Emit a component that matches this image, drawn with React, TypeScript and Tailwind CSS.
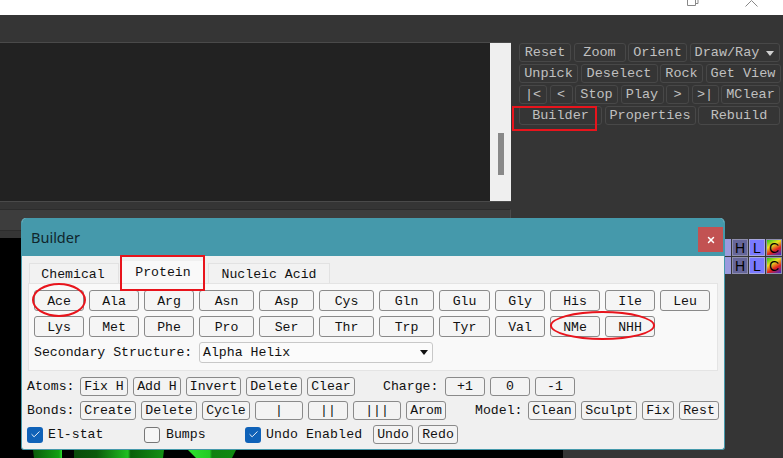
import React from 'react';
import { Check, X } from 'lucide-react';

const mono = "font-['Liberation_Mono',monospace]";

const RightRows = [
  [['Reset', 52], ['Zoom', 52], ['Orient', 59], ['Draw/Ray', 90]],
  [['Unpick', 59], ['Deselect', 77], ['Rock', 43], ['Get View', 75]],
  [['|<', 28], ['<', 23], ['Stop', 43], ['Play', 43], ['>', 23], ['>|', 27], ['MClear', 59]],
  [['Builder', 83], ['Properties', 91], ['Rebuild', 82]],
] as [string, number][][];

const residues = [
  'Ace', 'Ala', 'Arg', 'Asn', 'Asp', 'Cys', 'Gln', 'Glu', 'Gly', 'His', 'Ile', 'Leu',
  'Lys', 'Met', 'Phe', 'Pro', 'Ser', 'Thr', 'Trp', 'Tyr', 'Val', 'NMe', 'NHH',
];

const LightBtn = ({ label, w }: { label: string; w: number }) => (
  <button
    style={{ width: w }}
    className="h-[19px] shrink-0 rounded-[3px] border border-[#8a8a8a] bg-[#f3f3f3] text-center leading-[18px] text-[#111]"
  >
    {label}
  </button>
);

const CheckBox = ({ on }: { on: boolean }) =>
  on ? (
    <span className="flex size-4 items-center justify-center rounded-[3px] bg-[#0f62b8]">
      <Check size={11} strokeWidth={2} className="text-white" />
    </span>
  ) : (
    <span className="size-4 rounded-[3px] border border-[#777] bg-[#f6f6f6]" />
  );

const Swatches = () => (
  <div className="flex h-[17px] gap-px font-['Liberation_Sans',sans-serif] text-[14px] leading-none text-black">
    <span className="w-[6px] bg-[#9a9ade]" />
    <span className="flex w-4 items-center justify-center border border-[#8e8eae] bg-[#66669a]">H</span>
    <span className="flex w-4 items-center justify-center border border-[#a8a8e0] bg-[#7a7aff]">L</span>
    <span className="flex w-4 items-center justify-center border border-[#8e8eae] bg-[linear-gradient(150deg,#22c522_0%,#e8e020_35%,#e02020_65%,#3a2ad0_100%)]">C</span>
  </div>
);

const Builder = () => (
  <div className={`absolute left-[21px] top-[218px] h-[232px] w-[704px] overflow-hidden rounded-t-[5px] rounded-b-[3px] border-x border-b border-[#4599ab] bg-[#f0f0f0] text-[13.2px] text-[#111] ${mono}`}>
    <div className="flex h-[38px] items-start justify-between bg-[#4599ab] pl-[9px] pr-px pt-[9px]">
      <span className="-mt-px font-['Noto_Sans',sans-serif] text-[14.5px] leading-[22px] text-[#10262c]">Builder</span>
      <span className="flex h-[25px] w-[25px] items-center justify-center bg-[#c25252]">
        <X size={10} strokeWidth={3.5} className="text-white" />
      </span>
    </div>

    <div className="px-[6px] pt-[6px]">
      <div className="flex h-[21px] items-end">
        <span className="ml-px flex h-[20px] w-[90px] items-center justify-center border border-b-0 border-[#e2e2e2] bg-[#f2f2f2] pr-[2px] pt-[2px]">Chemical</span>
        <span className="ml-px flex h-[22px] w-[85px] items-center justify-center bg-[#f9f9f9] pl-[1px] pt-[2px]">Protein</span>
        <span className="ml-[3px] flex h-[20px] w-[122px] items-center justify-center border border-b-0 border-[#e2e2e2] bg-[#f2f2f2] pt-[2px]">Nucleic Acid</span>
      </div>
      <div className="h-[88px] w-[690px] border border-[#e4e4e4] bg-[#f9f9f9] pl-[5px] pt-[6px]">
        <div className="grid grid-cols-[50px_50px_50px_55px_55px_55px_55px_51px_50px_50px_50px_50px] gap-x-[5px] gap-y-[5px]">
          {residues.map((r) => (
            <button key={r} className="h-[21px] rounded-[3px] border border-[#8a8a8a] bg-[#f5f5f5] pt-px leading-[19px]">
              {r}
            </button>
          ))}
        </div>
        <div className="mt-[5px] flex h-[21px] items-center">
          <span className="w-[165px] pt-px">Secondary Structure:</span>
          <div className="flex h-[21px] w-[234px] items-center justify-between rounded-[3px] border border-[#c8c8c8] bg-[#fbfbfb] pl-[3px] pr-[4px]">
            <span className="pt-px">Alpha Helix</span>
            <span className="h-0 w-0 border-x-[4px] border-t-[5px] border-x-transparent border-t-[#111]" />
          </div>
        </div>
      </div>
    </div>

    <div className="mt-[6px] flex h-[19px] items-center pl-[5px]">
      <span className="w-[53px] pt-px">Atoms:</span>
      <div className="flex gap-[5px]">
        <LightBtn label="Fix H" w={48} />
        <LightBtn label="Add H" w={48} />
        <LightBtn label="Invert" w={55} />
        <LightBtn label="Delete" w={56} />
        <LightBtn label="Clear" w={48} />
      </div>
      <span className="ml-[28px] w-[62px] pt-px">Charge:</span>
      <div className="flex gap-[5px]">
        <LightBtn label="+1" w={40} />
        <LightBtn label="0" w={40} />
        <LightBtn label="-1" w={40} />
      </div>
    </div>

    <div className="mt-[5px] flex h-[19px] items-center pl-[5px]">
      <span className="w-[53px] pt-px">Bonds:</span>
      <div className="flex gap-[5px]">
        <LightBtn label="Create" w={56} />
        <LightBtn label="Delete" w={56} />
        <LightBtn label="Cycle" w={48} />
        <LightBtn label="|" w={48} />
        <LightBtn label="||" w={40} />
        <LightBtn label="|||" w={48} />
        <LightBtn label="Arom" w={40} />
      </div>
      <span className="ml-[29px] w-[53px] pt-px">Model:</span>
      <div className="flex gap-[5px]">
        <LightBtn label="Clean" w={48} />
        <LightBtn label="Sculpt" w={56} />
        <LightBtn label="Fix" w={32} />
        <LightBtn label="Rest" w={40} />
      </div>
    </div>

    <div className="mt-[5px] flex h-[19px] items-center pl-[5px]">
      <CheckBox on />
      <span className="ml-[5px] w-[96px] pt-px">El-stat</span>
      <CheckBox on={false} />
      <span className="ml-[6px] w-[79px] pt-px">Bumps</span>
      <CheckBox on />
      <span className="ml-[5px] w-[107px] pt-px tracking-[0.1px]">Undo Enabled</span>
      <div className="flex gap-[5px]">
        <LightBtn label="Undo" w={40} />
        <LightBtn label="Redo" w={40} />
      </div>
    </div>
  </div>
);

const App: React.FC = () => {
  return (
    <div className={`relative flex h-[458px] w-[783px] flex-col overflow-hidden bg-[#353535] ${mono}`}>
      {/* window title strip */}
      <div className="flex h-[15px] shrink-0 items-start bg-white pl-[687px]">
        <svg width="12" height="6" viewBox="0 0 12 6" fill="none" stroke="#888">
          <path d="M0.5 0 V5.5 H8.5 V0 M8.5 3.5 H11 V0" />
        </svg>
        <svg className="ml-[46px]" width="13" height="7" viewBox="0 0 13 7" fill="none" stroke="#888">
          <path d="M0.5 6.5 L6.5 0.5 L12.5 6.5" />
        </svg>
      </div>

      <div className="flex h-[194px] shrink-0">
        {/* console */}
        <div className="w-[511px] shrink-0 pt-[27px]">
          <div className="flex h-[160px] border-y border-[#4a4a4a]">
            <div className="flex-1 bg-[#222222]" />
            <div className="flex w-[21px] justify-center bg-[#efefef] pt-[90px]">
              <div className="h-[42px] w-[6px] bg-[#888888]" />
            </div>
          </div>
        </div>
        {/* command buttons */}
        <div className="flex flex-col gap-[2px] pl-[8px] pt-[28px] text-[13.5px] text-[#c0c0c0]">
          {RightRows.map((row, i) => (
            <div key={i} className="flex h-[19px] gap-[2.5px]">
              {row.map(([label, w]) => (
                <button
                  key={label}
                  style={{ width: w }}
                  className="flex h-[19px] shrink-0 items-center justify-center gap-[7px] whitespace-pre rounded-[3px] border border-[#484848] bg-[#353535] pt-px leading-none"
                >
                  {label}
                  {label === 'Draw/Ray' && (
                    <span className="h-0 w-0 border-x-[4px] border-t-[5px] border-x-transparent border-t-[#d0d0d0]" />
                  )}
                </button>
              ))}
            </div>
          ))}
        </div>
      </div>

      {/* lower area: status strip and molecule viewer */}
      <div className="flex w-[563px] flex-1 flex-col">
        <div className="h-[22px] w-[511px] shrink-0 border-y border-r border-[#2c2c2c] border-r-[#4a4a4a] bg-[#3d3d3d]" />
        <div className="mt-[7px] flex flex-1 flex-col justify-end bg-black">
          <svg width="563" height="8" viewBox="0 0 563 8" className="block">
            <defs>
              <linearGradient id="g1" x1="0" x2="1" y1="0" y2="0">
                <stop offset="0" stopColor="#0a5a0a" />
                <stop offset="0.9" stopColor="#12a012" />
                <stop offset="1" stopColor="#2fdc2f" />
              </linearGradient>
              <linearGradient id="g2" x1="0" x2="1" y1="0" y2="0">
                <stop offset="0" stopColor="#0a4a0a" />
                <stop offset="0.25" stopColor="#0b5a0b" />
                <stop offset="0.6" stopColor="#20c020" />
                <stop offset="0.63" stopColor="#0a5f0a" />
                <stop offset="1" stopColor="#139013" />
              </linearGradient>
              <linearGradient id="g3" x1="0" x2="1" y1="0" y2="0">
                <stop offset="0" stopColor="#2ee02e" />
                <stop offset="0.45" stopColor="#22cc22" />
                <stop offset="0.5" stopColor="#118011" />
                <stop offset="1" stopColor="#0f8a0f" />
              </linearGradient>
            </defs>
            <path d="M33 0 H62 V8 H34 Z" fill="url(#g1)" />
            <path d="M74 0 H164 L163 8 H74 Z" fill="url(#g2)" />
            <path d="M188 0 H236 L232 8 H196 Z" fill="url(#g3)" />
          </svg>
        </div>
      </div>

      <div className="absolute left-[725px] top-[239px] flex flex-col gap-px">
        <Swatches />
        <Swatches />
      </div>

      <Builder />

      {/* red annotations */}
      <div className="absolute left-[512px] top-[106px] h-[25px] w-[85px] border-2 border-[#e8141c]" />
      <div className="absolute left-[120px] top-[255px] h-[36px] w-[85px] border-2 border-[#e8141c]" />
      <div className="absolute left-[32px] top-[283px] h-[34px] w-[54px] rounded-[50%] border-2 border-[#e8141c]" />
      <div className="absolute left-[550px] top-[311px] h-[29px] w-[105px] rounded-[50%] border-2 border-[#e8141c]" />
    </div>
  );
};

export default App;
